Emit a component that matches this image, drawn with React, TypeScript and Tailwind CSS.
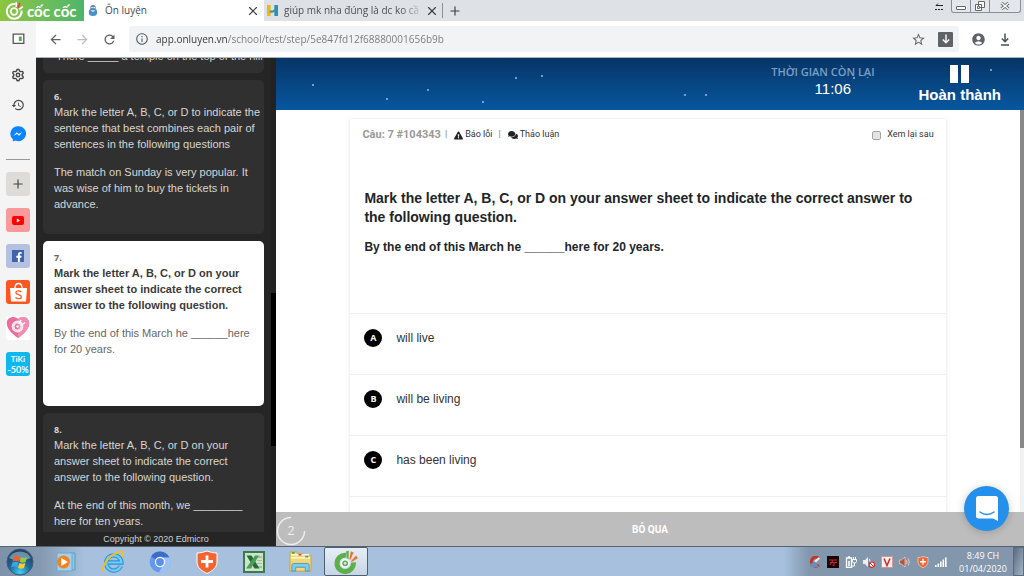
import { useState } from 'react';
import type { ReactNode } from 'react';
import clsx from 'clsx';
import { MdArrowBack, MdArrowForward, MdRefresh, MdInfoOutline, MdStarBorder, MdAccountCircle, MdHistory } from 'react-icons/md';
import { FaExclamationTriangle, FaComments, FaFacebookF } from 'react-icons/fa';
import { Plus, X, Settings } from 'lucide-react';

type Question = {
  id: number;
  lead: string;
  text: string;
  height: string;
};

const questions: Question[] = [
  {
    id: 6,
    lead: 'Mark the letter A, B, C, or D to indicate the sentence that best combines each pair of sentences in the following questions',
    text: 'The match on Sunday is very popular. It was wise of him to buy the tickets in advance.',
    height: 'min-h-[154px]',
  },
  {
    id: 7,
    lead: 'Mark the letter A, B, C, or D on your answer sheet to indicate the correct answer to the following question.',
    text: 'By the end of this March he ______here for 20 years.',
    height: 'min-h-[165px]',
  },
  {
    id: 8,
    lead: 'Mark the letter A, B, C, or D on your answer sheet to indicate the correct answer to the following question.',
    text: 'At the end of this month, we ________ here for ten years.',
    height: 'min-h-[154px]',
  },
];

const options = [
  { key: 'A', text: 'will live' },
  { key: 'B', text: 'will be living' },
  { key: 'C', text: 'has been living' },
  { key: 'D', text: '' },
];

const CocCocMark = ({ className, color = '#fff', rays = '#e8432e' }: { className?: string; color?: string; rays?: string }) => (
  <svg viewBox="0 0 24 24" className={className} aria-hidden="true">
    <path d="M12 5.200A8.200 8.200 0 1 0 19.400 12.500" fill="none" stroke={color} strokeWidth="5" />
    <circle cx="11.200" cy="13.300" r="3.600" fill="none" stroke="#fff" strokeWidth="1.600" />
    <circle cx="11.200" cy="13.300" r="2.200" fill="none" stroke={color} strokeWidth="1.400" />
    <path d="M12.600 8.600 12.200 1.200l2.600-.4-.2 7.800z" fill={color} />
    <path d="M15.300 9.200 16.800 1.200l2.700 1.200-3 7.300z" fill={rays} />
    <path d="m17 11.300 5-5.800 1.700 2.700-6 3.900z" fill={rays} />
  </svg>
);

const CocCocLogo = () => (
  <svg viewBox="0 0 24 24" className="size-[19px] shrink-0" fill="none" aria-hidden="true">
    <path d="M13 3.800A9.400 9.400 0 1 0 21 12" stroke="#fff" strokeWidth="2.600" />
    <circle cx="11.500" cy="13.200" r="4.200" stroke="#fff" strokeWidth="2.200" />
    <path d="M14.200 7.500V1.500" stroke="#fff" strokeWidth="2" />
    <path d="m16.600 8.500 2-6" stroke="#e8432e" strokeWidth="2.200" />
    <path d="m18 10.500 4.500-3.500" stroke="#fff" strokeWidth="2" />
  </svg>
);

const TabBar = () => (
  <header className="flex h-[21px] shrink-0 items-stretch bg-[#dee1e6] font-['Open_Sans',sans-serif]">
    <button className="flex w-[84px] items-center gap-[3px] bg-linear-to-r from-[#8cc63f] to-[#4db56a] pl-[5px] text-white" aria-label="Menu">
      <CocCocLogo />
      <span className="font-[Lato,sans-serif] text-[15px] leading-[20px] font-bold whitespace-nowrap">cốc cốc</span>
    </button>
    <div className="flex w-[180px] items-center bg-white pr-1 pl-1">
      <svg viewBox="0 0 12 14" className="mr-[7px] h-[13px] w-[10px]" aria-hidden="true">
        <circle cx="6" cy="3.6" r="3.2" fill="#5d7f9e" />
        <path d="M1 9a5 4.6 0 0 1 10 0 5 4.6 0 0 1-10 0" fill="#4a90c4" />
        <circle cx="4.8" cy="3.4" r="1" fill="#fff" />
        <circle cx="7.400" cy="3.4" r="1" fill="#fff" />
        <path d="M3 6.6h6L6 9z" fill="#dbe7ef" />
      </svg>
      <span className="flex-1 text-[10px] text-[#45494d]">Ôn luyện</span>
      <button aria-label="Close Ôn luyện"><X className="size-[14px] text-[#3c4043]" strokeWidth={2} /></button>
    </div>
    <div className="flex w-[178px] items-center pr-[3px] pl-[3px]">
      <svg viewBox="0 0 12 12" className="mr-[6px] size-[11px] shrink-0" aria-hidden="true">
        <path d="M0 0h4v12H0z" fill="#f2b51d" />
        <path d="M8 0h4v12H8z" fill="#2f8fb0" />
        <path d="M3 6h3l3-2v3L6 8.500H3z" fill="#3c9a8e" />
      </svg>
      <span className="flex-1 overflow-hidden bg-linear-to-r from-[#45494d] from-85% to-[#c8cbd0] bg-clip-text text-[10px] whitespace-nowrap text-transparent">
        giúp mk nha đúng là dc ko cầ
      </span>
      <button className="ml-1" aria-label="Close tab"><X className="size-[14px] text-[#3c4043]" strokeWidth={2} /></button>
    </div>
    <div className="my-[3px] border-l border-[#8d9095]" />
    <button className="ml-[5px]" aria-label="New tab"><Plus className="size-[14px] text-[#3c4043]" strokeWidth={2} /></button>
    <div className="ml-auto flex items-start pr-[3px]">
      <svg viewBox="0 0 10 8" className="mt-[3px] mr-[7px] h-2 w-[10px]" stroke="#222" strokeWidth="1" aria-hidden="true">
        <path d="M2 2.500h7M2 2.500l2-2" fill="none" />
        <path d="M1 6.500h8" strokeDasharray="2 1" />
      </svg>
      <div className="flex h-[13px] rounded-b-[3px] border border-t-0 border-[#8b8e94] bg-[#e3e6ea]">
        <button className="flex w-[19px] items-center justify-center border-r border-[#8b8e94]" aria-label="Minimize">
          <span className="mt-[3px] h-1 w-[10px] rounded-[1px] border border-[#666] bg-white" />
        </button>
        <button className="flex w-[19px] items-center justify-center border-r border-[#8b8e94]" aria-label="Restore">
          <svg viewBox="0 0 10 10" className="size-[10px]" fill="#fff" stroke="#666" aria-hidden="true">
            <path d="M3.5.5h6v6h-6zM.5 3.5h6v6h-6z" />
            <path d="M2.5 5.5h2v2h-2z" />
          </svg>
        </button>
        <button className="flex w-[30px] items-center justify-center" aria-label="Close">
          <svg viewBox="0 0 10 8" className="h-2 w-[10px]" aria-hidden="true">
            <path d="m1.5 1 7 6m0-6-7 6" stroke="#666" strokeWidth="3" />
            <path d="m1.5 1 7 6m0-6-7 6" stroke="#fff" strokeWidth="1.4" />
          </svg>
        </button>
      </div>
    </div>
  </header>
);

const RailTile = ({ label, className, children }: { label: string; className?: string; children: ReactNode }) => (
  <button aria-label={label} className={clsx('flex size-6 shrink-0 items-center justify-center overflow-hidden rounded-[3px]', className)}>
    {children}
  </button>
);

const Rail = () => (
  <nav className="flex w-9 shrink-0 flex-col items-center bg-[#f4f4f4] pt-3">
    <button aria-label="Sidebar">
      <svg viewBox="0 0 12 12" className="h-3 w-[13px]" aria-hidden="true">
        <path d="M.7 1.2h10.6v9.2H.7z" fill="#fff" stroke="#555" strokeWidth="1.3" />
        <path d="M6.3 3.6h3v4.4h-3z" fill="#52b043" />
      </svg>
    </button>
    <button className="mt-[23px]" aria-label="Settings"><Settings className="size-[14px] text-[#454545]" strokeWidth={2.4} /></button>
    <button className="mt-4" aria-label="History"><MdHistory className="size-[14px] text-[#454545]" /></button>
    <button className="mt-[14px]" aria-label="Messenger">
      <svg viewBox="0 0 16 16" className="size-4" aria-hidden="true">
        <path d="M8 .3a7.6 7.4 0 0 0-5.300 12.700L3 15.600l2.300-1.200A7.600 7.400 0 1 0 8 .3z" fill="#0a85ff" />
        <path d="m3.500 9.700 3.300-3.400 2 1.700 3.500-1.800-3.200 3.500-2.100-1.700z" fill="#fff" />
      </svg>
    </button>
    <hr className="mt-[17px] mb-3 w-6 border-[#999]" />
    <div className="flex flex-col gap-3">
      <RailTile label="Add" className="bg-[#dddcd8]"><Plus className="size-[14px] text-[#444]" /></RailTile>
      <RailTile label="YouTube" className="bg-[#f99a9a]">
        <svg viewBox="0 0 12 9" className="h-[9px] w-3" aria-hidden="true">
          <rect width="12" height="9" rx="2" fill="#f00" />
          <path d="m4.800 2.600 3.200 1.900-3.200 1.900z" fill="#fff" />
        </svg>
      </RailTile>
      <RailTile label="Facebook" className="bg-[#b3c1de]">
        <span className="flex size-3 items-end justify-end bg-[#3f64ae]"><FaFacebookF className="size-[10px] text-white" /></span>
      </RailTile>
      <RailTile label="Shopee" className="bg-[#ff5722]">
        <svg viewBox="0 0 24 24" className="size-6" fill="none" aria-hidden="true">
          <path d="M4 8h17l-1 13.500H5z" fill="#fff" />
          <path d="M9 8c0-6 7-6 7 0" stroke="#fff" strokeWidth="1.300" />
          <path d="M15.300 12c-2-1.700-5.400-1.300-5.400.7 0 2.300 5.500 1.600 5.500 4.200 0 2.100-3.700 2.300-5.900.5" stroke="#ff5722" strokeWidth="1.300" />
        </svg>
      </RailTile>
      <RailTile label="Cốc Cốc" className="bg-white">
        <svg viewBox="0 0 24 24" className="size-6" fill="none" aria-hidden="true">
          <path d="M12 22C5 17 .8 12.500.8 7 .8.500 9-.8 12 3c3-3.800 11.200-2.500 11.200 4 0 5.500-4.200 10-11.200 15z" fill="#ec6d9c" />
          <path d="M12 22V3c3-3.800 11.200-2.500 11.200 4 0 5.500-4.200 10-11.200 15z" fill="#f28db2" />
          <circle cx="11.500" cy="10.500" r="4.400" stroke="#fce3ec" strokeWidth="3" />
          <circle cx="11.500" cy="10.500" r="1.200" fill="#fff" />
          <path d="m13 8 2-4m0 5.500 4-3" stroke="#fff" strokeWidth="1.500" />
        </svg>
      </RailTile>
      <RailTile label="Tiki" className="flex-col bg-[#0db7f0] font-[Lato,sans-serif] font-bold text-white">
        <span className="text-[8px] leading-[10px]">TiKi</span>
        <span className="text-[9px] leading-[11px]">-50%</span>
      </RailTile>
    </div>
  </nav>
);

const Toolbar = () => (
  <div className="flex h-[37px] shrink-0 items-center border-b border-[#a9b4bf] bg-white pr-3 pl-3 text-[#5f6368]">
    <button aria-label="Back"><MdArrowBack className="size-[15px]" /></button>
    <button className="ml-3" aria-label="Forward"><MdArrowForward className="size-[15px] text-[#bcbec1]" /></button>
    <button className="ml-3" aria-label="Reload"><MdRefresh className="size-[15px]" /></button>
    <div className="ml-3 flex h-[26px] flex-1 items-center rounded-[3px] bg-[#f1f3f4] pr-[6px] pl-[6px]">
      <MdInfoOutline className="size-[14px] shrink-0" />
      <input
        aria-label="Address"
        defaultValue="app.onluyen.vn/school/test/step/5e847fd12f68880001656b9b"
        className="ml-[7px] min-w-0 flex-1 bg-[linear-gradient(90deg,#303438_71px,#74787c_71px)] bg-clip-text font-['Open_Sans',sans-serif] text-[10px] text-transparent outline-none"
      />
      <button aria-label="Bookmark"><MdStarBorder className="size-[15px]" /></button>
      <button className="ml-3 flex size-[15px] items-center justify-center rounded-[1px] bg-[#5f6368]" aria-label="Download video">
        <svg viewBox="0 0 10 10" className="size-[10px]" fill="none" stroke="#fff" strokeWidth="1.400" aria-hidden="true"><path d="M5 .5v8M1.800 5.500 5 8.700l3.200-3.200" /></svg>
      </button>
    </div>
    <button className="ml-3" aria-label="Account"><MdAccountCircle className="size-[15px]" /></button>
    <button className="mr-[2px] ml-[14px]" aria-label="Downloads">
      <svg viewBox="0 0 10 13" className="h-[13px] w-[10px]" fill="none" stroke="#4c5054" strokeWidth="1.500" aria-hidden="true"><path d="M5 .5v8M1.800 5.500 5 8.700l3.200-3.200M1 12h8" /></svg>
    </button>
  </div>
);

const QuestionCard = ({ question, active, onSelect }: { question: Question; active: boolean; onSelect: () => void }) => (
  <button
    onClick={onSelect}
    className={clsx(
      'flex shrink-0 flex-col rounded-[5px] pt-[10px] pr-[2px] pl-[11px] text-left text-[11px] leading-4',
      question.height,
      active ? 'bg-white text-[#666]' : 'bg-[#303030] text-[#d6d6d6]',
    )}
  >
    <span className="font-['Open_Sans',sans-serif] text-[9px] leading-[14px] font-bold">{question.id}.</span>
    <span className={clsx('mb-3', active && 'font-bold text-[#3a3a3a]')}>{question.lead}</span>
    <span>{question.text}</span>
  </button>
);

const QuestionList = () => {
  const [current, setCurrent] = useState(7);

  return (
    <aside className="flex w-60 shrink-0 flex-col bg-[#252525] font-['Liberation_Sans',Arial,sans-serif]">
      <div className="flex min-h-0 flex-1">
        <div className="flex min-w-0 flex-1 flex-col gap-[7px] overflow-hidden pr-[7px] pl-[7px]">
          <div className="flex h-[15px] shrink-0 flex-col justify-end overflow-hidden rounded-b-[5px] bg-[#303030] px-[13px] pb-[9px] text-[11px] leading-4 whitespace-nowrap text-[#d6d6d6]">
            <p>There _____ a temple on the top of the hill</p>
          </div>
          {questions.map((question) => (
            <QuestionCard
              key={question.id}
              question={question}
              active={question.id === current}
              onSelect={() => setCurrent(question.id)}
            />
          ))}
        </div>
        <div className="w-[5px] bg-[#222]">
          <div className="mt-[235px] h-[153px] bg-black" />
        </div>
      </div>
      <footer className="z-10 h-[14px] shrink-0 bg-[#252525] text-center text-[9px] leading-[14px] text-[#d0d0d0]">Copyright © 2020 Edmicro</footer>
    </aside>
  );
};

const ExamHeader = () => (
  <div className="relative flex h-[52px] shrink-0 items-start justify-end bg-linear-to-b from-[#063566] to-[#0757a0] pr-[23px] text-white">
    <svg className="absolute inset-0 size-full" fill="#9dbbdc" aria-hidden="true">
      <circle cx="37" cy="27" r="1" />
      <circle cx="111" cy="41" r="1" />
      <circle cx="152" cy="32" r="1" />
      <circle cx="207" cy="44" r="1" />
      <circle cx="240" cy="20" r="1" />
      <circle cx="266" cy="18" r="1" />
      <circle cx="409" cy="37" r="1" />
      <circle cx="430" cy="37" r="1" />
      <circle cx="578" cy="20" r="1" />
      <circle cx="715" cy="12" r="1" />
    </svg>
    <div className="relative mr-11 flex flex-col items-center pt-[7px]">
      <span className="font-['Open_Sans',sans-serif] text-[11px] leading-[14px] font-semibold text-[#7c9fc4]">THỜI GIAN CÒN LẠI</span>
      <span className="ml-5 text-[15px] leading-5">11:06</span>
    </div>
    <button className="relative flex flex-col items-center pt-[7px]">
      <span className="flex gap-[3px]">
        <span className="h-[18px] w-2 bg-white" />
        <span className="h-[18px] w-2 bg-white" />
      </span>
      <span className="mt-[2px] text-[15px] leading-5 font-bold">Hoàn thành</span>
    </button>
  </div>
);

const Exam = () => {
  const [answer, setAnswer] = useState('');

  return (
    <main className="flex min-w-0 flex-1 flex-col bg-white font-['Liberation_Sans',Arial,sans-serif]">
      <ExamHeader />
      <div className="flex min-h-0 flex-1">
        <div className="min-w-0 flex-1 overflow-hidden pt-[9px]">
          <section className="mx-auto w-4/5 bg-white shadow-[0_0_3px_rgba(0,0,0,0.12)]">
            <div className="flex h-8 items-center px-3 font-[Roboto,sans-serif] text-[9px] text-[#333]">
              <h1 className="text-[11px] font-bold text-[#999]">Câu: 7 #104343</h1>
              <span className="mr-[7px] ml-1 text-[#777]">|</span>
              <button className="flex items-center gap-[2px]"><FaExclamationTriangle className="size-[9px] text-[#222]" /> Báo lỗi</button>
              <span className="mr-[7px] ml-[6px] text-[#777]">|</span>
              <button className="flex items-center gap-[2px]"><FaComments className="size-[10px] text-[#222]" /> Thảo luận</button>
              <label className="ml-auto flex items-center gap-[6px]">
                <input type="checkbox" className="size-[9px] appearance-none rounded-[2px] border border-[#a5a5a5] bg-[#e4e4e4] checked:bg-[#555]" />
                Xem lại sau
              </label>
            </div>
            <div className="min-h-[162px] px-[14px] pt-[38px] font-bold text-[#212529]">
              <p className="text-[14px] leading-[19px]">
                Mark the letter A, B, C, or D on your answer sheet to indicate the correct answer to the following question.
              </p>
              <p className="mt-[11px] text-[12px] leading-[18px]">By the end of this March he ______here for 20 years.</p>
            </div>
            {options.map((option) => (
              <label key={option.key} className="flex h-[61px] items-start gap-[14px] border-t border-[#f0f0f0] pt-[15px] pl-[14px] text-[12px] leading-[18px] text-[#333]">
                <input type="radio" name="answer" className="peer sr-only" checked={answer === option.key} onChange={() => setAnswer(option.key)} />
                <span className="size-[18px] rounded-full bg-black text-center font-['Open_Sans',sans-serif] text-[9px] font-bold text-white peer-checked:bg-[#2490eb]">{option.key}</span>
                <span>{option.text}</span>
              </label>
            ))}
          </section>
        </div>
        <div className="w-1 bg-[#f1f1f1]">
          <div className="h-[338px] bg-[#888]" />
        </div>
      </div>
      <div className="relative flex h-[34px] shrink-0 items-center bg-[#bdbdbd]">
        <svg viewBox="0 0 30 30" className="absolute top-1 left-0 size-[30px]" fill="none" stroke="#eee" strokeWidth="1.500" aria-hidden="true">
          <path d="M15 1.500A13.500 13.500 0 1 0 28.500 15" />
        </svg>
        <span className="relative w-[30px] pt-1 text-center font-['Open_Sans',sans-serif] text-[13px] text-[#eee]">2</span>
        <button className="flex-1 pr-[30px] font-[Roboto,sans-serif] text-[10px] font-bold text-white">BỎ QUA</button>
      </div>
    </main>
  );
};

const StartOrb = () => (
  <svg viewBox="0 0 28 28" className="size-7" aria-hidden="true">
    <defs>
      <radialGradient id="orb" cx=".5" cy=".9" r=".8">
        <stop offset="0" stopColor="#3ed0f5" />
        <stop offset=".5" stopColor="#1f6a9c" />
        <stop offset="1" stopColor="#20425f" />
      </radialGradient>
    </defs>
    <circle cx="14" cy="14" r="13" fill="url(#orb)" stroke="#3d5a74" />
    <path d="M3 10a12 11 0 0 1 22 0c-6 3-16 3-22 0z" fill="#b7d2e6" opacity=".5" />
    <path d="M8 8.500c2-1 4-1 6 .2l-1.300 4.800c-2-1.100-4-1.100-6-.1z" fill="#f0622a" />
    <path d="M15 9.200c2 1 4 1 6-.2l-1.400 4.900c-2 1-4 1-6-.1z" fill="#9aca3c" />
    <path d="M6.500 14.400c2-1 4-.9 6 .1l-1.400 4.900c-2-1.100-4-1.100-6 0z" fill="#3fa4e2" />
    <path d="M13.400 15c2 1 4 1 6 0L18 19.900c-2 1-4 1-6-.1z" fill="#fccb2f" />
  </svg>
);

const PlayerIcon = () => (
  <svg viewBox="0 0 22 22" className="size-[22px]" aria-hidden="true">
    <path d="M15 2h5v17h-5z" fill="#8dc3e3" stroke="#5b9cc5" />
    <path d="M2 2h15v18H2z" fill="#a4cfe8" stroke="#6ba9cd" />
    <circle cx="8.500" cy="11" r="6.400" fill="#f58220" />
    <path d="m6.300 6.900 6.600 4.100-6.600 4.100z" fill="#fff" />
  </svg>
);

const IeIcon = () => (
  <svg viewBox="0 0 24 24" className="size-6" fill="none" aria-hidden="true">
    <path d="M19.800 16a7.600 7.600 0 1 1 .6-3.500H7" stroke="#2b93d8" strokeWidth="4.400" />
    <path d="M19.800 16a7.600 7.600 0 1 1 .6-3.500H7" stroke="#6fcdf6" strokeWidth="2.200" />
    <path d="M3 22c-4-3 3-14 11-18.500 4.500-2.500 8-2.700 8 .5 0 1-.3 2-.8 3" stroke="#f3c11b" strokeWidth="1.800" />
  </svg>
);

const ChromiumIcon = () => (
  <svg viewBox="0 0 24 24" className="size-[22px]" aria-hidden="true">
    <circle cx="12" cy="12" r="11.300" fill="#6698f3" />
    <path d="M12 12 2.300 6A11.300 11.300 0 0 1 22.200 7H12z" fill="#3e6bc6" />
    <path d="M22.200 7A11.300 11.300 0 0 1 11 23.300l5-8.800L12 7z" fill="#9cc2fa" />
    <circle cx="12" cy="12" r="5.600" fill="#fff" />
    <circle cx="12" cy="12" r="4.300" fill="#5b8ff0" />
  </svg>
);

const ShieldIcon = ({ className }: { className: string }) => (
  <svg viewBox="0 0 22 24" className={className} aria-hidden="true">
    <path d="M1 3c4 0 7-1 10-2 3 1 6 2 10 2v9c0 6-5 9-10 11.500C6 21 1 18 1 12z" fill="#f26430" stroke="#fff" />
    <path d="M11 5.500v12M5 11.500h12" stroke="#fff" strokeWidth="2.800" />
  </svg>
);

const ExcelIcon = () => (
  <svg viewBox="0 0 22 22" className="size-[22px]" aria-hidden="true">
    <path d="M1 1h20v20H1z" fill="#cfe3cb" stroke="#3d7a4a" strokeWidth="2" />
    <path d="M14 5h5v12h-5z" fill="#9cc59a" />
    <path d="M14 8h5m-5 3h5m-5 3h5" stroke="#fff" />
    <path d="M3.500 4.500h5l8 13h-5z" fill="#1f6f36" />
    <path d="M16 4.500h-4L3 17.500h5z" fill="#4a9e55" />
  </svg>
);

const ExplorerIcon = () => (
  <svg viewBox="0 0 26 24" className="h-[23px] w-[25px]" aria-hidden="true">
    <path d="M2 2h7l1 2h7l1 2h6v16H2z" fill="#f3d878" stroke="#c9a640" />
    <path d="M3 5h19M3 8h20" stroke="#fff6d0" strokeWidth="1.500" />
    <path d="M4 3h3" stroke="#3aa34a" strokeWidth="1.600" />
    <path d="M11 5h3" stroke="#d34a35" strokeWidth="1.600" />
    <path d="M18 7h3" stroke="#3a8ad3" strokeWidth="1.600" />
    <path d="M4 22v-6q0-2 2-2h14q2 0 2 2v6h-4v-4H8v4z" fill="#7ecbed" stroke="#4a9cc4" />
  </svg>
);

const taskIcons = [
  { label: 'Media Player', icon: <PlayerIcon /> },
  { label: 'Internet Explorer', icon: <IeIcon /> },
  { label: 'Chromium', icon: <ChromiumIcon /> },
  { label: 'Shield', icon: <ShieldIcon className="h-6 w-[22px]" /> },
  { label: 'Excel', icon: <ExcelIcon /> },
  { label: 'Explorer', icon: <ExplorerIcon /> },
];

const Tray = () => (
  <div className="flex items-center gap-[6px]">
    <svg viewBox="0 0 12 12" className="size-3" aria-hidden="true">
      <path d="M10 2.500A4.500 4.500 0 1 0 10 9" fill="none" stroke="#c8331f" strokeWidth="3" />
      <path d="m5 5 5-4 1 1.500-4 4z" fill="#ececec" />
      <path d="m1 8 5-2 4 5H2z" fill="#5f8fc4" />
    </svg>
    <svg viewBox="0 0 12 12" className="size-3" aria-hidden="true">
      <path d="M0 0h12v12H0z" fill="#130808" />
      <path d="M2 4h8M3 6.500h7M6 4 3 9m4-2.500V9.500L5.500 9" fill="none" stroke="#d81f26" />
    </svg>
    <svg viewBox="0 0 12 12" className="size-3" fill="none" stroke="#fff" aria-hidden="true">
      <path d="M1.500 2h5v9.500h-5zM3 .8h2" strokeWidth="1.300" />
      <path d="M3.500 5h1v5h-1z" fill="#fff" strokeWidth=".5" />
      <path d="M8.500 1v2m2-2v2M7.500 3.500h4v2l-1 1.500h-2l-1-1.500zM9.500 7v3H7" />
    </svg>
    <svg viewBox="0 0 12 12" className="size-3" aria-hidden="true">
      <path d="M0 4h2l3-3v10L2 8H0z" fill="#eee" />
      <path d="M6.500 3q1.500 3 0 6" fill="none" stroke="#eee" />
      <circle cx="8.800" cy="8.700" r="2.700" fill="#fff" stroke="#d9281e" strokeWidth="1.100" />
      <path d="m7 7 3.600 3.500" stroke="#d9281e" />
    </svg>
    <svg viewBox="0 0 12 12" className="size-3" aria-hidden="true">
      <path d="M.5.5h11v11H.5z" fill="#f6eeee" stroke="#c99" />
      <path d="m3 2.500 3 7 3-7" fill="none" stroke="#cf2a2a" strokeWidth="1.500" />
    </svg>
    <svg viewBox="0 0 12 12" className="size-3" fill="none" aria-hidden="true">
      <path d="M.5 4h2l3.500-3v10L2.500 8h-2z" fill="#b4553b" stroke="#eee" strokeWidth=".6" />
      <path d="M7.500 4q1 2 0 4M9.300 2.500q2 3.500 0 7" stroke="#e7c3b6" />
    </svg>
    <ShieldIcon className="size-3" />
    <svg viewBox="0 0 12 12" className="size-3" fill="#fff" aria-hidden="true">
      <path d="M0 9h1.600v2H0zM2.500 7.500h1.600V11H2.500zM5 5.500h1.600V11H5zM7.500 3.500h1.600V11H7.500zM10 1.500h1.600V11H10z" />
    </svg>
  </div>
);

const Taskbar = () => (
  <footer className="flex h-[30px] shrink-0 items-stretch border-t border-[#56626f] bg-[linear-gradient(90deg,#7d92aa_0,#8599b0_40px,#a6c0de_85px,#a6c0de_calc(100%_-_240px),#8296ac_calc(100%_-_215px))]">
    <button className="flex w-10 items-center justify-center" aria-label="Start"><StartOrb /></button>
    <div className="flex w-[284px] items-stretch pl-[3px]">
      {taskIcons.map((item) => (
        <button key={item.label} aria-label={item.label} className="flex flex-1 items-center justify-center">{item.icon}</button>
      ))}
    </div>
    <button className="flex w-11 items-center justify-center rounded-[2px] border border-[#4e5f73] bg-linear-to-b from-[#e6edf6] to-[#c8d5e6]" aria-label="Cốc Cốc">
      <CocCocMark className="size-6" color="#5bb04a" rays="#f0702a" />
    </button>
    <div className="ml-auto flex items-center">
      <Tray />
      <div className="mr-[3px] ml-[9px] w-[54px] text-center font-['Open_Sans',sans-serif] text-[9px] leading-[13px] whitespace-nowrap text-white">
        <div>8:49 CH</div>
        <div>01/04/2020</div>
      </div>
      <button className="h-full w-[11px] border border-[#5b6c80] bg-linear-to-br from-[#5c6c80] to-[#a5b5c8]" aria-label="Show desktop" />
    </div>
  </footer>
);

const App = () => (
  <div className="relative flex h-screen flex-col overflow-hidden font-['Noto_Sans',sans-serif]">
    <TabBar />
    <div className="flex min-h-0 flex-1">
      <Rail />
      <div className="flex min-w-0 flex-1 flex-col">
        <Toolbar />
        <div className="flex min-h-0 flex-1">
          <QuestionList />
          <Exam />
        </div>
      </div>
    </div>
    <Taskbar />
    <button className="absolute right-[15px] bottom-[45px] flex size-[45px] items-center justify-center rounded-full bg-[#2490eb] shadow-[0_1px_8px_rgba(0,0,0,0.2)]" aria-label="Chat">
      <svg viewBox="0 0 22 25" className="h-[25px] w-[22px]" aria-hidden="true">
        <path d="M2.500 0h17A2.500 2.500 0 0 1 22 2.500V25l-5-2.500H2.500A2.500 2.500 0 0 1 0 20V2.500A2.500 2.500 0 0 1 2.500 0z" fill="#fff" />
        <path d="M4 16q7 5 14 0" fill="none" stroke="#2490eb" strokeWidth="1.500" strokeLinecap="round" />
      </svg>
    </button>
  </div>
);

export default App;
